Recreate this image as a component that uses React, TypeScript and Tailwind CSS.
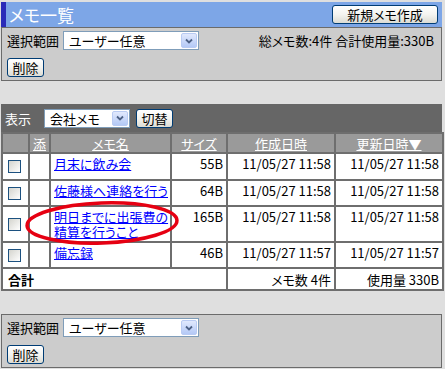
import type { ReactNode } from "react";

type Memo = {
	name: ReactNode;
	size: string;
	created: string;
	updated: string;
	rowH: string;
};

const memos: Memo[] = [
	{ name: "月末に飲み会", size: "55B", created: "11/05/27 11:58", updated: "11/05/27 11:58", rowH: "h-[27px]" },
	{ name: "佐藤様へ連絡を行う", size: "64B", created: "11/05/27 11:58", updated: "11/05/27 11:58", rowH: "h-[26px]" },
	{
		name: (
			<>
				明日までに出張費の
				<br />
				精算を行うこと
			</>
		),
		size: "165B",
		created: "11/05/27 11:58",
		updated: "11/05/27 11:58",
		rowH: "h-[36px]",
	},
	{ name: "備忘録", size: "46B", created: "11/05/27 11:57", updated: "11/05/27 11:57", rowH: "h-[26px]" },
];

function FakeSelect({ value, width }: { value: string; width: string }) {
	return (
		<div className={`flex h-[19px] items-center border border-[#7f9db9] bg-white ${width}`}>
			<span className="flex-1 pl-[5px] text-[13px] leading-none text-black">{value}</span>
			<span className="mr-[1px] flex h-[15px] w-[16px] items-center justify-center rounded-[2px] border border-[#b9cbf3] bg-linear-to-b from-[#e1e9fd] to-[#b4c9f6]">
				<svg width="8" height="6" viewBox="0 0 8 6">
					<path d="M1 1.5l3 3 3-3" fill="none" stroke="#4d6185" strokeWidth="1.8" />
				</svg>
			</span>
		</div>
	);
}

function XpButton({ children, width }: { children: ReactNode; width: string }) {
	return (
		<button
			className={`flex h-[19px] items-center justify-center rounded-[3px] border border-[#003c74] bg-linear-to-b from-white via-[#f4f4f0] to-[#dcdcd4] text-[13px] leading-none text-black ${width}`}
		>
			{children}
		</button>
	);
}

function Checkbox() {
	return (
		<span className="mx-auto block h-[13px] w-[13px] border border-[#1c5180] bg-linear-to-br from-[#d4d4ce] to-white" />
	);
}

function SelectPanel({ right }: { right?: ReactNode }) {
	return (
		<div className="flex flex-col gap-[8px] border border-[#6b6b6b] bg-[#cccccc] px-[5px] pt-[3px] pb-[3px]">
			<div className="flex items-center justify-between">
				<div className="flex items-center gap-[4px]">
					<span className="text-[13px]">選択範囲</span>
					<FakeSelect value="ユーザー任意" width="w-[136px]" />
				</div>
				{right}
			</div>
			<XpButton width="w-[37px]">削除</XpButton>
		</div>
	);
}

export default function App() {
	const th = "border border-[#6e6e6e] bg-[#9a9a9a] text-center font-normal text-white underline h-[20px] p-0";
	const td = "border border-[#6e6e6e] align-top px-[3px] pt-[2px]";

	return (
		<div className="relative h-[369px] w-[445px] bg-[#dfdfdf] pt-[2px] font-['Noto_Sans_CJK_JP','Liberation_Sans',sans-serif] text-[13px] leading-[15px] text-black [font-feature-settings:'palt']">
			<div className="ml-[1px] w-[441px]">
				{/* Title bar */}
				<div className="flex h-[25px] items-center justify-between border-l-[5px] border-[#2a2ab8] bg-[#7da6e7] pl-[3px] pr-[4px]">
					<h1 className="text-[17px] leading-none text-white">メモ一覧</h1>
					<XpButton width="w-[106px]">新規メモ作成</XpButton>
				</div>

				<SelectPanel right={<span className="pr-[2px]">総メモ数:4件 合計使用量:330B</span>} />

				{/* List */}
				<div className="mt-[23px]">
					<div className="flex h-[28px] items-center bg-[#666666] pl-[4px]">
						<span className="w-[39px] text-white">表示</span>
						<FakeSelect value="会社メモ" width="w-[86px]" />
						<div className="ml-[6px]">
							<XpButton width="w-[37px]">切替</XpButton>
						</div>
					</div>

					<table className="w-[441px] table-fixed border-separate border-spacing-0 border border-[#6e6e6e] bg-white">
						<colgroup>
							<col className="w-[27px]" />
							<col className="w-[21px]" />
							<col className="w-[121px]" />
							<col className="w-[56px]" />
							<col className="w-[108px]" />
							<col className="w-[108px]" />
						</colgroup>
						<thead>
							<tr>
								<th className={th}></th>
								<th className={th}>添</th>
								<th className={th}>メモ名</th>
								<th className={th}>サイズ</th>
								<th className={th}>作成日時</th>
								<th className={th}>更新日時▼</th>
							</tr>
						</thead>
						<tbody>
							{memos.map((m, i) => (
								<tr key={i} className={m.rowH}>
									<td className="border border-[#6e6e6e] p-0 pr-[2px] align-middle">
										<Checkbox />
									</td>
									<td className={td}></td>
									<td className={`${td} whitespace-nowrap`}>
										<a href="#" className="text-[#0000ff] underline">
											{m.name}
										</a>
									</td>
									<td className={`${td} text-right`}>{m.size}</td>
									<td className={`${td} text-right`}>{m.created}</td>
									<td className={`${td} text-right`}>{m.updated}</td>
								</tr>
							))}
							<tr className="h-[22px]">
								<td colSpan={4} className="border border-[#6e6e6e] px-[5px] align-middle font-bold">
									合計
								</td>
								<td className="border border-[#6e6e6e] px-[3px] text-right align-middle">メモ数 4件</td>
								<td className="border border-[#6e6e6e] px-[3px] text-right align-middle">使用量 330B</td>
							</tr>
						</tbody>
					</table>
				</div>

				<div className="mt-[23px]">
					<SelectPanel />
				</div>
			</div>

			{/* Red annotation ellipse */}
			<svg className="pointer-events-none absolute top-0 left-0" width="445" height="369">
				<ellipse
					cx="102"
					cy="223"
					rx="75"
					ry="20"
					transform="rotate(-2 102 223)"
					fill="none"
					stroke="#e60012"
					strokeWidth="3.5"
				/>
			</svg>
		</div>
	);
}
